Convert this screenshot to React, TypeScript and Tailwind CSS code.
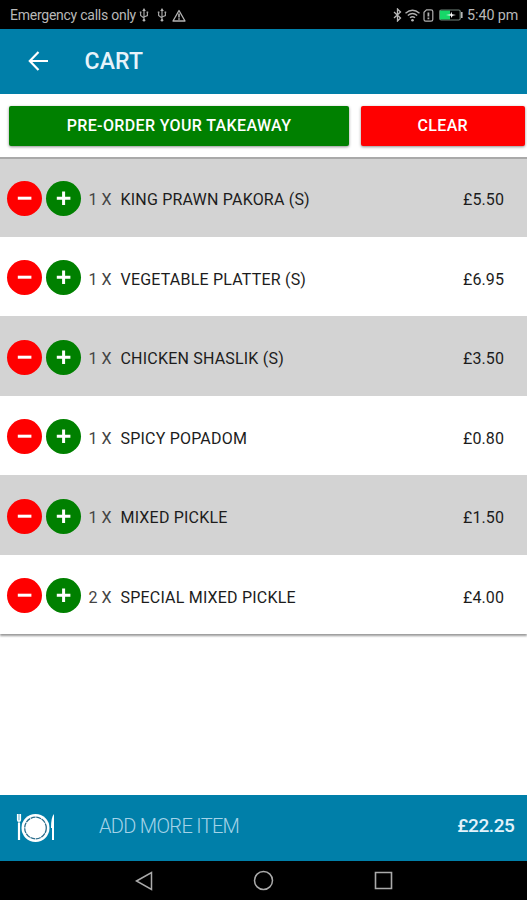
import React from 'react';

const items = [
  { qty: 1, name: 'KING PRAWN PAKORA (S)', price: '£5.50' },
  { qty: 1, name: 'VEGETABLE PLATTER (S)', price: '£6.95' },
  { qty: 1, name: 'CHICKEN SHASLIK (S)', price: '£3.50' },
  { qty: 1, name: 'SPICY POPADOM', price: '£0.80' },
  { qty: 1, name: 'MIXED PICKLE', price: '£1.50' },
  { qty: 2, name: 'SPECIAL MIXED PICKLE', price: '£4.00' },
];

function Usb({ className }: { className: string }) {
  return (
    <svg className={className} width="10" height="14" viewBox="0 0 10 14" fill="none" stroke="#a4a4a4" strokeWidth="1.2">
      <path d="M5 2v10M1.6 4.5v3L5 10M8.4 4.5v3L5 9" />
      <path d="M5 0L3.2 3h3.6z" fill="#b4b4b4" stroke="none" />
      <circle cx="5" cy="12.2" r="1.3" fill="#b4b4b4" stroke="none" />
      <path d="M0.8 4.2h1.6M7.6 4.2h1.6" strokeWidth="1.6" />
    </svg>
  );
}

function StatusBar() {
  return (
    <div className="flex h-[28.5px] shrink-0 items-center bg-black pl-[10px] pr-[9px] pt-[2px] text-[14px] text-[#b8b8b8]">
      <span className="w-[126px] tracking-[-0.25px]">Emergency calls only</span>
      <Usb className="ml-[3px]" />
      <Usb className="ml-[7.5px]" />
      <svg className="ml-[5px]" width="14" height="13" viewBox="0 0 14 13" fill="none" stroke="#b4b4b4" strokeWidth="1.3" strokeLinejoin="round">
        <path d="M7 1.5L13 12H1z" />
        <path d="M7 4.5v4M7 9.3v1.5" strokeWidth="1.6" />
      </svg>
      <div className="flex-1" />
      <svg width="9" height="14" viewBox="0 0 9 14" fill="none" stroke="#b8b8b8" strokeWidth="1.3">
        <path d="M1 4l6.5 6L4.5 13V1l3 3L1 10" />
      </svg>
      <svg className="ml-[3px]" width="15" height="13" viewBox="0 0 15 13" fill="none" stroke="#b0b0b0" strokeWidth="1.4">
        <path d="M0.5 4.2Q7.5 -1.6 14.5 4.2M2.8 6.5Q7.5 2.6 12.2 6.5M5 8.7Q7.5 6.7 10 8.7" />
        <circle cx="7.5" cy="11.3" r="1.3" fill="#b8b8b8" stroke="none" />
      </svg>
      <svg className="ml-[3px]" width="11" height="13" viewBox="0 0 11 13" fill="none" stroke="#b0b0b0" strokeWidth="1.2">
        <path d="M3.5 .8h4.5q1.8 0 1.8 1.8v8q0 1.6-1.8 1.6H2.6Q1 12.2 1 10.6V3.3z" />
        <path d="M5.4 3.5v4M5.4 8.5v1.8" strokeWidth="1.8" />
      </svg>
      <svg className="ml-[5px]" width="24" height="12" viewBox="0 0 24 12" fill="none">
        <rect x=".7" y="1" width="20.5" height="10" rx="1.5" stroke="#70827a" strokeWidth="1.2" />
        <path d="M1 1.5h10v9H1z" fill="#16d768" />
        <path d="M22.8 3v6" stroke="#b8b8b8" strokeWidth="1.6" />
        <path d="M7 6l4.5-.8.8-2.4.8 2.4L17 6l-3.5.7-.9 2.4-.8-2.4z" fill="#fff" />
      </svg>
      <span className="ml-[4px] w-[51px] text-[14.3px] tracking-[-0.05px]">5:40 pm</span>
    </div>
  );
}

function RoundButton({ plus, className }: { plus?: boolean; className: string }) {
  return (
    <button className={`flex h-[35px] w-[35px] items-center justify-center rounded-full ${className}`}>
      <svg width="35" height="35" viewBox="0 0 35 35" stroke="#fff" strokeWidth="3">
        <path d={plus ? 'M10.8 17.2h13.6M17.6 10.4v13.6' : 'M10.8 17.2h13.6'} />
      </svg>
    </button>
  );
}

export default function App() {
  return (
    <div className="flex h-[900px] w-[527px] flex-col overflow-hidden whitespace-nowrap bg-white [font-family:Roboto,sans-serif]">
      <StatusBar />
      <header className="flex h-[65.5px] shrink-0 items-center bg-[#007fa9] pl-[28px]">
        <svg width="20" height="20" viewBox="0 0 20 20" fill="none" stroke="#fff" strokeWidth="2.2">
          <path d="M10.5 .9L1.8 10l8.7 9.1M2 10h18" />
        </svg>
        <h1 className="ml-[36.5px] mt-[2px] text-[23px] font-medium tracking-[0.15px] text-[#e8f3fa]">CART</h1>
      </header>

      <div className="flex h-[63px] shrink-0 gap-[12px] pl-[9px] pt-[11.5px]">
        <button className="h-[40.5px] w-[340px] rounded-[2px] bg-[#008000] text-[16px] font-medium tracking-[0.36px] text-white shadow-[0_1px_3px_rgba(0,0,0,0.45)]">
          PRE-ORDER YOUR TAKEAWAY
        </button>
        <button className="h-[40.5px] w-[163.5px] rounded-[2px] bg-[#ff0000] text-[16px] font-medium tracking-[0.36px] text-white shadow-[0_1px_3px_rgba(0,0,0,0.45)]">
          CLEAR
        </button>
      </div>

      <ul className="shrink-0 border-t-2 border-[#a9a9a9] shadow-[0_2px_2px_rgba(0,0,0,0.4)]">
        {items.map((item) => (
          <li key={item.name} className="flex h-[79.5px] items-center bg-white pl-[7px] pr-[23px] pt-[3px] text-[16px] text-[#1c1c1c] odd:bg-[#d3d3d3] first:h-[77.5px] first:pt-[1px]">
            <RoundButton className="bg-[#ff0000]" />
            <RoundButton plus className="ml-[3.5px] bg-[#008000]" />
            <span className="ml-[8px] mt-[4px] w-[32px] text-[#444]">{item.qty} X</span>
            <span className="mt-[4px] flex-1 tracking-[0.2px]">{item.name}</span>
            <span className="mt-[4px] tracking-[0.1px]">{item.price}</span>
          </li>
        ))}
      </ul>

      <div className="flex-1" />

      <footer className="flex h-[66px] shrink-0 items-center bg-[#007fa9] pl-[16px] pr-[12.5px]">
        <svg width="40" height="30" viewBox="0 0 40 30" fill="none">
          <path d="M1.5 1v6q0 1.5 1.5 1.5Q4.5 8.5 4.5 7V1M3 1v26" stroke="#fff" strokeWidth="1.2" />
          <path d="M3 10v17" stroke="#fff" strokeWidth="2.2" />
          <path d="M38 1q-3 3-3 14h1v12h2z" fill="#fff" />
          <circle cx="19.5" cy="15" r="14" fill="#fff" />
          <circle cx="19.5" cy="15" r="10.8" stroke="#2b6d8c" strokeWidth="1.3" strokeDasharray="5 0.7" />
        </svg>
        <span className="ml-[43px] mt-[-4px] flex-1 text-[20px] font-light tracking-[-0.68px] text-[#a5d3e8]">ADD MORE ITEM</span>
        <span className="mt-[-3px] text-[19px] font-medium tracking-[-0.4px] text-[#e3f3fb]">£22.25</span>
      </footer>

      <nav className="flex h-[39px] shrink-0 items-center bg-black pl-[135px]">
        <svg width="18" height="20" viewBox="0 0 18 20" fill="none" stroke="#aaa" strokeWidth="1.5">
          <path d="M1.5 10L16.5 1.5v17z" />
        </svg>
        <svg className="ml-[100px]" width="21" height="21" viewBox="0 0 21 21" fill="none" stroke="#aaa" strokeWidth="1.5">
          <circle cx="10.5" cy="10.5" r="9" />
        </svg>
        <svg className="ml-[100px]" width="19" height="19" viewBox="0 0 19 19" fill="none" stroke="#aaa" strokeWidth="1.6">
          <path d="M1.5 1.5h16v16h-16z" />
        </svg>
      </nav>
    </div>
  );
}
